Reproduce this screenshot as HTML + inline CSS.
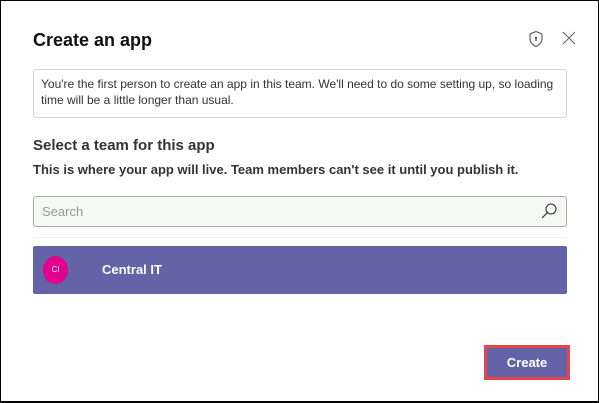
<!DOCTYPE html>
<html><head><style>
*{margin:0;padding:0;box-sizing:border-box}
body{width:599px;height:403px;background:#fff;font-family:"Liberation Sans",sans-serif;position:relative;overflow:hidden;border:1px solid #000;border-bottom-width:2px}
.a{position:absolute}
</style></head><body>
<div class="a" style="left:32px;top:29px;font-size:18px;font-weight:bold;color:#111">Create an app</div>
<svg class="a" style="left:527px;top:29px" width="16" height="18" viewBox="0 0 16 18"><path d="M8 1.5 L14 4 V9 C14 12.5 11 15 8 16.5 C5 15 2 12.5 2 9 V4 Z" fill="none" stroke="#555" stroke-width="1.1"/><circle cx="8" cy="8" r="1.2" fill="#555"/><path d="M8 8.5V11" stroke="#555" stroke-width="1.2"/></svg>
<svg class="a" style="left:561px;top:30px" width="14" height="14" viewBox="0 0 14 14"><path d="M1 1L13 13M13 1L1 13" stroke="#666" stroke-width="1.1"/></svg>
<div class="a" style="left:32px;top:68px;width:534px;height:49px;border:1px solid #d6d6d6;border-radius:3px;padding:6px 7px;font-size:12px;line-height:16px;color:#333">You're the first person to create an app in this team. We'll need to do some setting up, so loading time will be a little longer than usual.</div>
<div class="a" style="left:32px;top:136px;font-size:15px;font-weight:bold;color:#333">Select a team for this app</div>
<div class="a" style="left:32px;top:161px;font-size:13px;font-weight:bold;color:#333">This is where your app will live. Team members can't see it until you publish it.</div>
<div class="a" style="left:32px;top:195px;width:534px;height:31px;border:1px solid #a8aaa8;border-radius:3px;background:#f5f9f5;padding:7px 8px;font-size:13px;color:#999">Search</div>
<svg class="a" style="left:539px;top:201px" width="18" height="18" viewBox="0 0 18 18"><circle cx="11" cy="7" r="5" fill="none" stroke="#333" stroke-width="1.1"/><path d="M7.5 10.5L2 16" stroke="#333" stroke-width="1.2"/></svg>
<div class="a" style="left:32px;top:236px;width:534px;height:1px;background:#eee"></div>
<div class="a" style="left:32px;top:245px;width:534px;height:48px;background:#6264a7;border-radius:2px"></div>
<div class="a" style="left:42px;top:255px;width:25px;height:28px;border-radius:50%;background:#e3008c;color:#fff;font-size:8px;text-align:center;line-height:28px">CI</div>
<div class="a" style="left:101px;top:261px;font-size:13px;font-weight:bold;color:#fff">Central IT</div>
<div class="a" style="left:483px;top:344px;width:86px;height:35px;border:3px solid #e8424a;background:#6264a7;color:#fff;font-size:13px;font-weight:bold;text-align:center;line-height:29px">Create</div>
</body></html>
